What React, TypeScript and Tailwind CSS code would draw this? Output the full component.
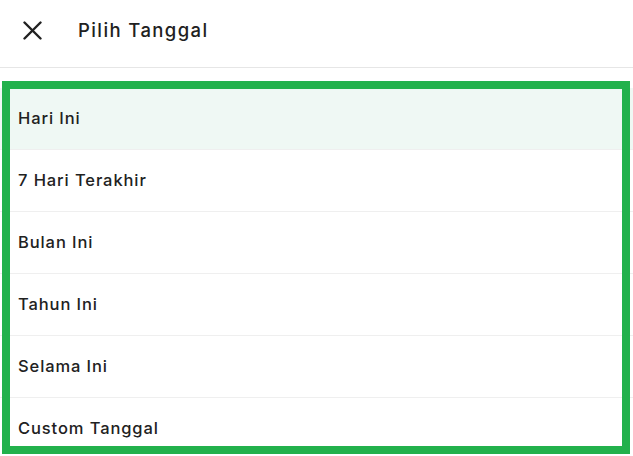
const options = ["Hari Ini", "7 Hari Terakhir", "Bulan Ini", "Tahun Ini", "Selama Ini", "Custom Tanggal"]

export default function App() {
  return (
    <div className="relative w-[633px] h-[456px] overflow-hidden bg-white text-[#212121] font-['Inter',sans-serif]">
      {/* header */}
      <div className="flex items-center h-[68px] pb-[6px] border-b border-[#e6e6e6]">
        <svg className="ml-[23px] w-[19px] h-[19px]" viewBox="0 0 19 19" fill="none" stroke="#212121" strokeWidth="2.4" strokeLinecap="round">
          <path d="M1.5 1.5L17.5 17.5M17.5 1.5L1.5 17.5" />
        </svg>
        <h1 className="ml-[36px] text-[18.5px] font-medium tracking-[1.4px]">Pilih Tanggal</h1>
      </div>

      {/* list */}
      <div className="mt-[20px]">
        {options.map((o, i) => (
          <div
            key={o}
            className={`flex items-center h-[62px] pl-[18px] border-b border-[#efefef] text-[16.5px] font-medium tracking-[0.9px] ${i === 0 ? "bg-[#eff8f4]" : ""}`}
          >
            {o}
          </div>
        ))}
      </div>

      {/* highlight frame */}
      <div className="absolute left-[2px] top-[81px] w-[628px] h-[373px] border-[8px] border-[#22b14c] pointer-events-none" />
    </div>
  )
}
